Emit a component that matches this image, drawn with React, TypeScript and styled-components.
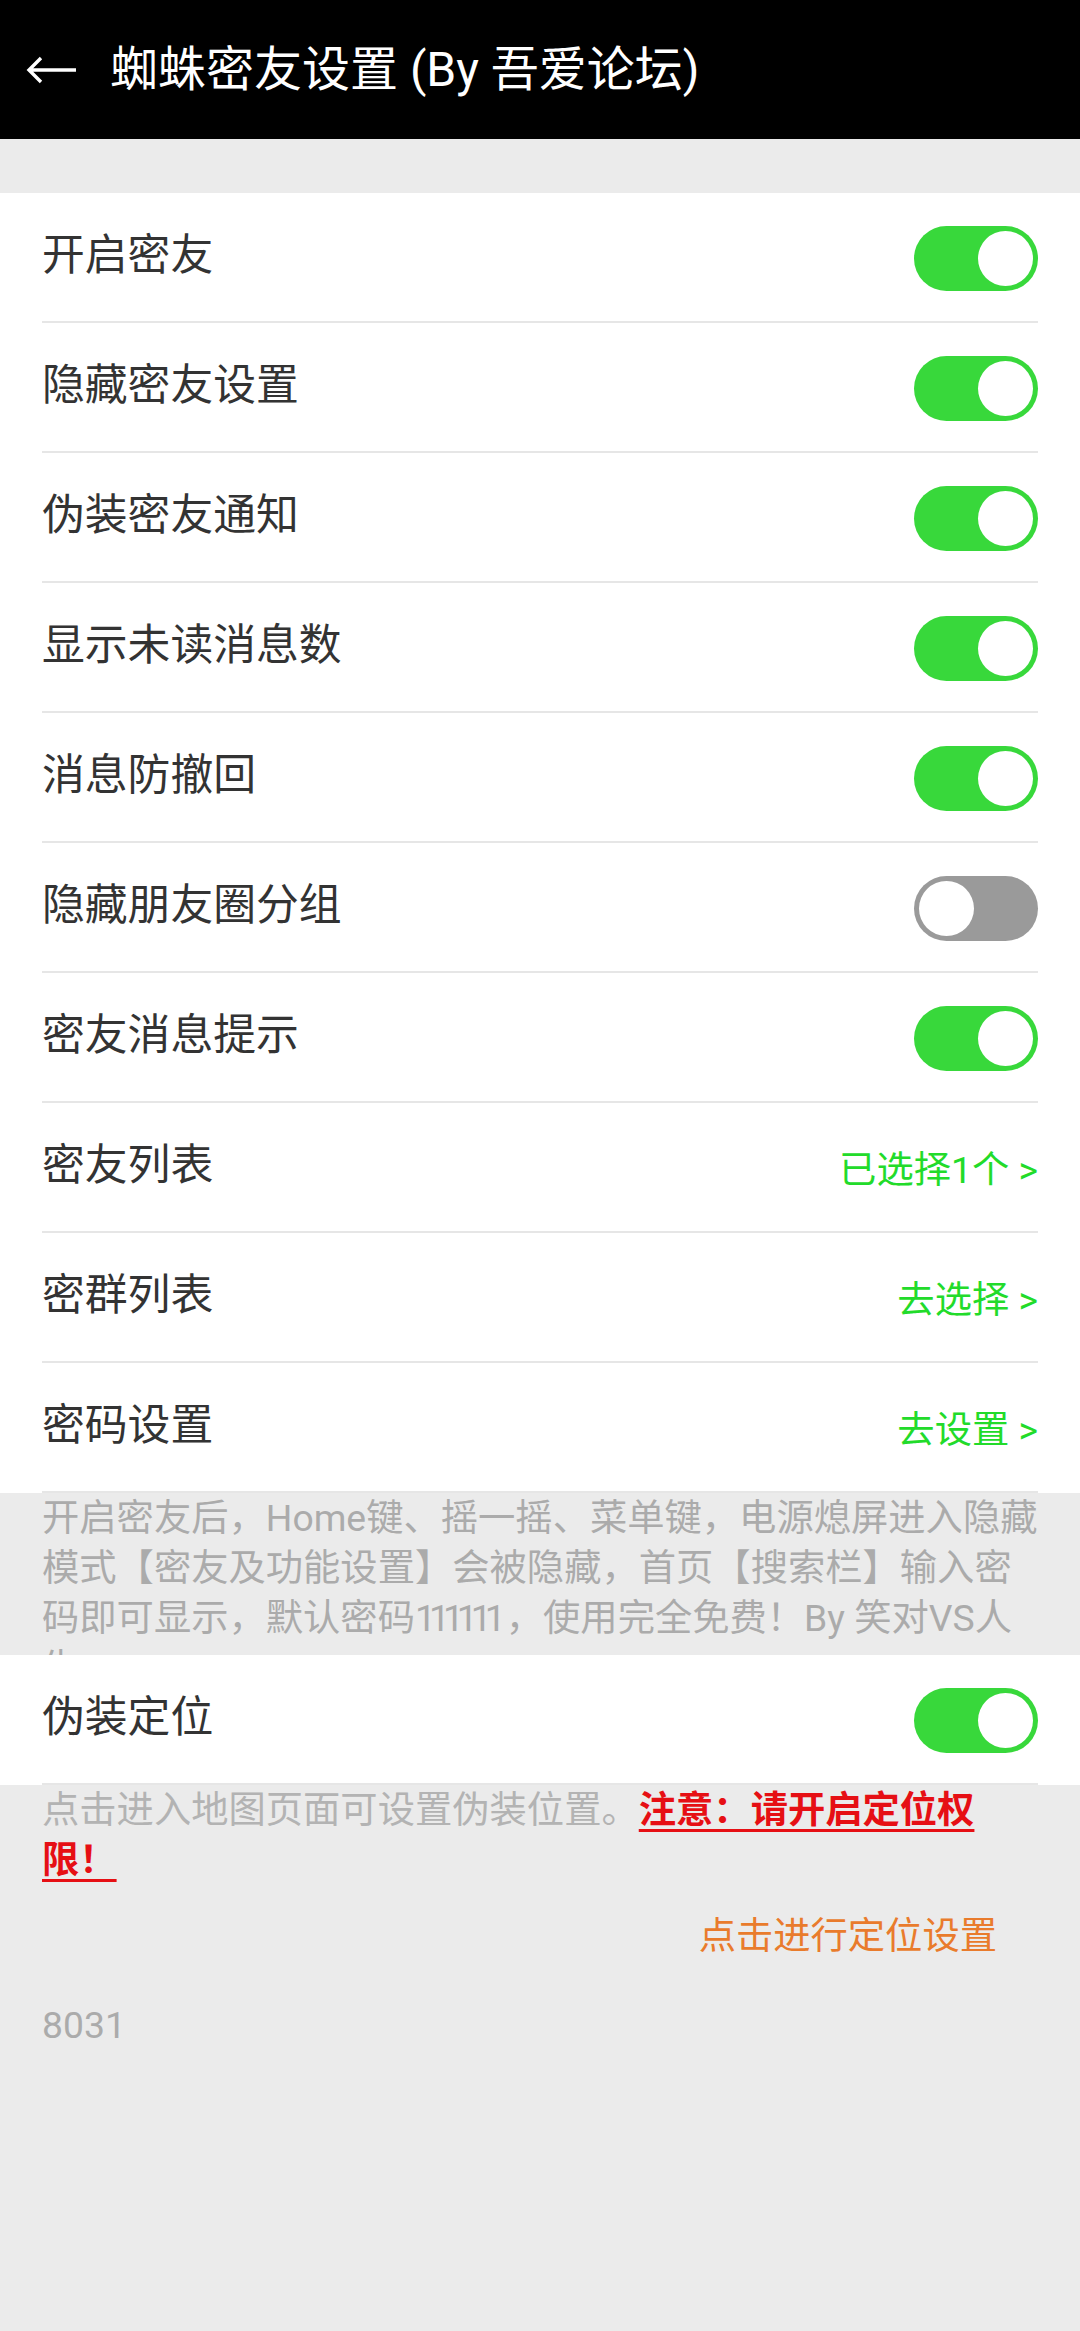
import styled, { createGlobalStyle } from "styled-components";

const GlobalStyle = createGlobalStyle`
  html, body {
    margin: 0;
    padding: 0;
    background: #ebebeb;
  }
  body {
    font-family: Roboto, "Noto Sans CJK SC", "Noto Sans", sans-serif;
    -webkit-font-smoothing: antialiased;
  }
`;

interface ToggleProps {
  on: boolean;
}

interface RowProps {
  label: string;
  toggle?: boolean;
  link?: string;
}

const rows: RowProps[] = [
  { label: "开启密友", toggle: true },
  { label: "隐藏密友设置", toggle: true },
  { label: "伪装密友通知", toggle: true },
  { label: "显示未读消息数", toggle: true },
  { label: "消息防撤回", toggle: true },
  { label: "隐藏朋友圈分组", toggle: false },
  { label: "密友消息提示", toggle: true },
  { label: "密友列表", link: "已选择1个 >" },
  { label: "密群列表", link: "去选择 >" },
  { label: "密码设置", link: "去设置 >" },
];

const Switch: React.FC<ToggleProps> = ({ on }) => (
  <Track $on={on}>
    <Knob $on={on} />
  </Track>
);

const SettingRow: React.FC<RowProps> = ({ label, toggle, link }) => (
  <Row>
    <RowInner>
      <Label>{label}</Label>
      {toggle !== undefined && <Switch on={toggle} />}
      {link && <LinkText>{link}</LinkText>}
    </RowInner>
  </Row>
);

export default function App() {
  return (
    <Page>
      <GlobalStyle />
      <Header>
        <BackIcon width="52" height="30" viewBox="0 0 52 30">
          <path
            d="M3 15 H50 M15 3 L3 15 L15 27"
            fill="none"
            stroke="#fff"
            strokeWidth="3.4"
            strokeLinecap="butt"
            strokeLinejoin="miter"
          />
        </BackIcon>
        <Title>蜘蛛密友设置 (By 吾爱论坛)</Title>
      </Header>

      <Spacer />

      <Section>
        {rows.map((r) => (
          <SettingRow key={r.label} {...r} />
        ))}
      </Section>

      <Note>
        开启密友后，Home键、摇一摇、菜单键，电源熄屏进入隐藏模式【密友及功能设置】会被隐藏，首页【搜索栏】输入密码即可显示，默认密码
        <Digits>111111</Digits>，使用完全免费！By 笑对VS人生
      </Note>

      <Section>
        <SettingRow label="伪装定位" toggle />
      </Section>

      <LocationNote>
        点击进入地图页面可设置伪装位置。<Warning>注意：请开启定位权限！</Warning>
      </LocationNote>

      <ActionRow>
        <ActionText>点击进行定位设置</ActionText>
      </ActionRow>

      <Version>8031</Version>
    </Page>
  );
}

const Page = styled.div`
  min-height: 2331px;
  background: #ebebeb;
`;

const Header = styled.div`
  height: 139px;
  background: #000;
  display: flex;
  align-items: center;
  padding-left: 26px;
  box-sizing: border-box;
`;

const BackIcon = styled.svg`
  flex: none;
  margin-right: 32px;
`;

const Title = styled.div`
  color: #fff;
  font-size: 48px;
  line-height: 1;
  white-space: nowrap;
`;

const Spacer = styled.div`
  height: 54px;
`;

const Section = styled.div`
  background: #fff;
`;

const Row = styled.div`
  padding: 0 42px;
`;

const RowInner = styled.div`
  height: 130px;
  box-sizing: border-box;
  display: flex;
  align-items: center;
  justify-content: space-between;
  border-bottom: 2px solid #e6e6e6;
`;

const Label = styled.span`
  font-size: 42.8px;
  line-height: 1.2;
  padding-bottom: 2px;
  color: #333;
`;

const LinkText = styled.span`
  font-size: 37.3px;
  color: #22db2a;
  white-space: nowrap;
`;

const Track = styled.div<{ $on: boolean }>`
  position: relative;
  width: 124px;
  height: 65px;
  border-radius: 33px;
  background: ${(p) => (p.$on ? "#38d83b" : "#9a9a9a")};
  flex: none;
  margin-top: 2px;
`;

const Knob = styled.div<{ $on: boolean }>`
  position: absolute;
  top: 5px;
  ${(p) => (p.$on ? "right: 5px;" : "left: 5px;")}
  width: 55px;
  height: 55px;
  border-radius: 50%;
  background: #fff;
`;

const Note = styled.div`
  height: 162px;
  overflow: hidden;
  padding: 0 42px;
  font-size: 37.3px;
  line-height: 50px;
  color: #ababab;
`;

const Digits = styled.span`
  letter-spacing: -7px;
  padding-right: 7px;
`;

const LocationNote = styled.div`
  padding: 0 42px;
  font-size: 37.3px;
  line-height: 50px;
  color: #b3b3b3;
`;

const Warning = styled.span`
  color: #e60f14;
  font-weight: 700;
  text-decoration: underline;
  text-underline-offset: 6px;
  text-decoration-thickness: 3px;
`;

const ActionRow = styled.div`
  display: flex;
  justify-content: flex-end;
  padding: 26px 83px 0 0;
`;

const ActionText = styled.span`
  font-size: 37.3px;
  line-height: 50px;
  color: #e97b2c;
`;

const Version = styled.div`
  padding: 39px 42px 0;
  font-size: 37.3px;
  line-height: 50px;
  color: #ababab;
`;
